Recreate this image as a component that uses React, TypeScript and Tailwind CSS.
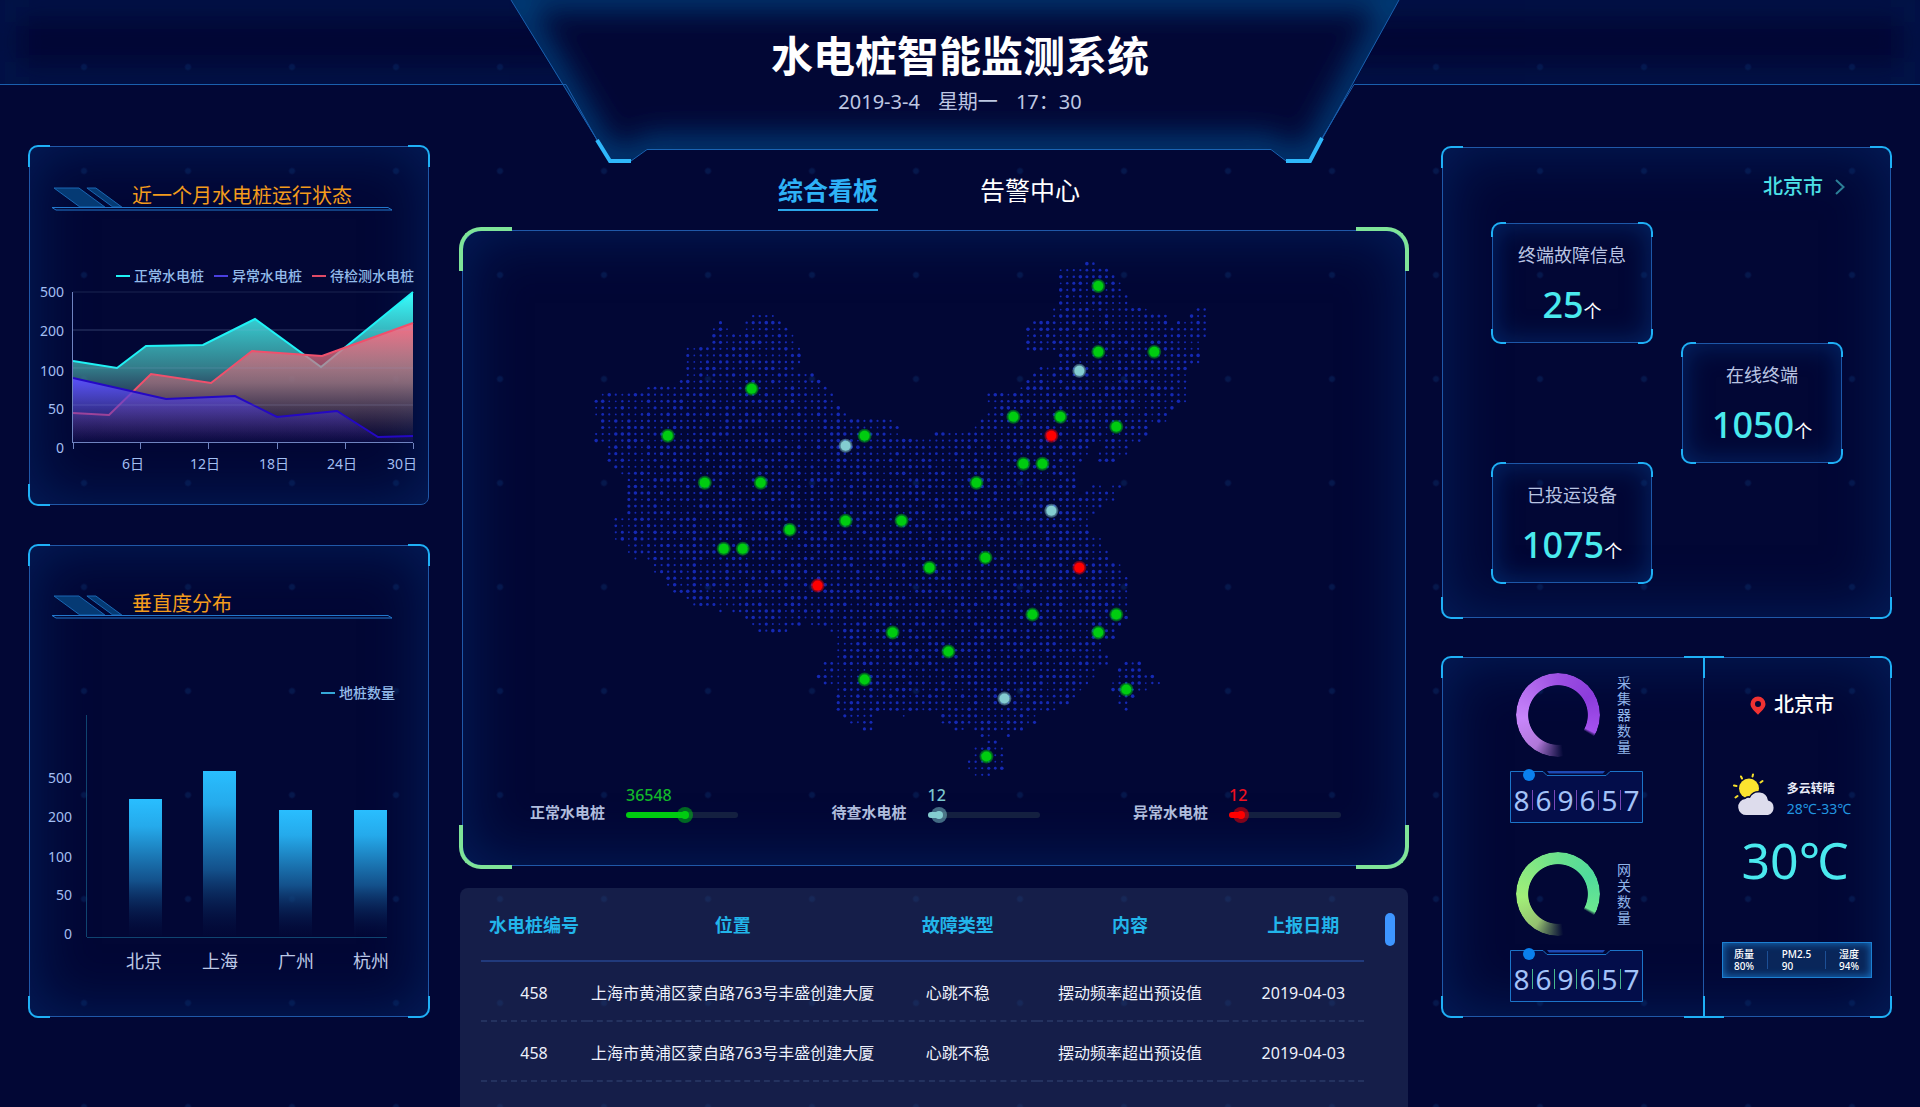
import React from "react";

type Span = [number, number];

/* ------------------------------------------------------------------ */
/* Framing                                                             */
/* ------------------------------------------------------------------ */

const CORNER = {
  tl: "-top-0.5 -left-0.5 border-t-2 border-l-2 rounded-tl-[10px]",
  tr: "-top-0.5 -right-0.5 border-t-2 border-r-2 rounded-tr-[10px]",
  bl: "-bottom-0.5 -left-0.5 border-b-2 border-l-2 rounded-bl-[10px]",
  br: "-bottom-0.5 -right-0.5 border-b-2 border-r-2 rounded-br-[10px]",
};

type CornerKey = keyof typeof CORNER;

function Corners({ which = ["tl", "tr", "bl", "br"], size }: { which?: CornerKey[]; size: string }) {
  return (
    <>
      {which.map((k) => (
        <span key={k} aria-hidden="true" className={`pointer-events-none absolute border-[#1fb0f6] ${size} ${CORNER[k]}`} />
      ))}
    </>
  );
}

function Panel({
  children,
  className = "",
  corners,
}: {
  children: React.ReactNode;
  className?: string;
  corners?: CornerKey[];
}) {
  return (
    <section
      className={`relative rounded-lg border border-[#2058a8] shadow-[inset_0_0_60px_rgba(4,48,120,0.58)] ${className}`}
    >
      <Corners which={corners} size="size-[22px]" />
      {children}
    </section>
  );
}

function PanelTitle({ children }: { children: React.ReactNode }) {
  return (
    <div className="relative mr-[35px] ml-[22px] h-[30px]">
      <svg className="absolute inset-x-0 bottom-0 h-6 w-full" viewBox="0 0 342 24" preserveAspectRatio="none" fill="none" aria-hidden="true">
        <path d="M2 1h25l26 19H28z" fill="#053a74" stroke="#1a67b4" />
        <path d="M35 1h9l26 19H61z" fill="#053a74" stroke="#1a67b4" />
        <path d="M0 20.500h337l4 2.500H4z" stroke="#2277cc" />
      </svg>
      <h2 className="relative ml-20 text-xl leading-[30px] text-[#f39c1c]">{children}</h2>
    </div>
  );
}

/* ------------------------------------------------------------------ */
/* Header                                                              */
/* ------------------------------------------------------------------ */

function Header() {
  return (
    <header className="relative h-[146px] shrink-0 text-center">
      <svg className="absolute inset-x-0 top-0 h-[166px] w-full" viewBox="0 0 1920 166" preserveAspectRatio="none" fill="none" aria-hidden="true">
        <defs>
          <filter id="soft" x="-20%" y="-60%" width="140%" height="220%">
            <feGaussianBlur stdDeviation="15" />
          </filter>
          <clipPath id="hub">
            <path d="M511 0 562 84 610 161H631L647 149H1271L1286 161H1310L1353 84 1399 0Z" />
          </clipPath>
          <clipPath id="barL">
            <path d="M0 0H511L562 84H0Z" />
          </clipPath>
          <clipPath id="barR">
            <path d="M1399 0H1920V84H1353Z" />
          </clipPath>
        </defs>
        <g clipPath="url(#barL)">
          <path d="M0 0H600V84H0Z" stroke="#04205f" strokeWidth="24" filter="url(#soft)" opacity="0.6" />
        </g>
        <g clipPath="url(#barR)">
          <path d="M1320 0H1920V84H1320Z" stroke="#04205f" strokeWidth="24" filter="url(#soft)" opacity="0.6" />
        </g>
        <path d="M511 0 562 84 610 161H631L647 149H1271L1286 161H1310L1353 84 1399 0Z" fill="#020735" />
        <g clipPath="url(#hub)">
          <path d="M505 -6 604 163H634L650 150H1268L1284 163H1314L1405 -6Z" stroke="#04437f" strokeWidth="26" filter="url(#soft)" />
        </g>
        <path d="M0 84.500H566L597 140M511 0 610 161" stroke="#1a5fae" />
        <path d="M1920 84.500H1354L1322 138M1399 0 1310 161" stroke="#1a5fae" />
        <path d="M631 161 647 149.500H1271L1286 161" stroke="#1a64b4" />
        <path d="M597 140 610 161H631" stroke="#2fb8fb" strokeWidth="4" />
        <path d="M1322 138 1310 161H1286" stroke="#2fb8fb" strokeWidth="4" />
      </svg>
      <div className="relative pt-8">
        <h1 className="text-[42px] leading-[48px] font-bold text-white">水电桩智能监测系统</h1>
        <p className="mt-2 flex justify-center gap-[18px] text-xl leading-7 text-[#bfc7e2]">
          <span>2019-3-4</span>
          <span>星期一</span>
          <span>17：30</span>
        </p>
      </div>
    </header>
  );
}

/* ------------------------------------------------------------------ */
/* Left column                                                         */
/* ------------------------------------------------------------------ */

function LegendItem({ color, label }: { color: string; label: string }) {
  return (
    <li className="flex items-center gap-1">
      <span className={`h-0.5 w-3.5 ${color}`} />
      {label}
    </li>
  );
}

const NORMAL: Span[] = [[44, 93], [88, 100], [117, 78], [174, 77], [226, 51], [292, 99], [384, 24]];
const PENDING: Span[] = [[44, 145], [80, 147], [122, 106], [182, 115], [223, 83], [293, 88], [384, 55]];
const FAULTY: Span[] = [[44, 110], [137, 131], [206, 128], [248, 149], [308, 143], [349, 169], [384, 168]];

const toLine = (pts: Span[]) => pts.map((p) => p.join(",")).join(" ");
const toArea = (pts: Span[]) => `${toLine(pts)} 384,175 44,175`;

function StatusChart() {
  const yTicks: [string, number][] = [["500", 23], ["200", 62], ["100", 102], ["50", 140], ["0", 179]];
  const xTicks: [string, number][] = [["6日", 104], ["12日", 176], ["18日", 245], ["24日", 313], ["30日", 373]];
  return (
    <svg className="-mt-3 w-full" viewBox="1 4 398 204" fill="none" role="img" aria-label="近一个月水电桩运行状态">
      <defs>
        <linearGradient id="gNormal" gradientUnits="userSpaceOnUse" x1="0" y1="24" x2="0" y2="175">
          <stop offset="0" stopColor="#38ffff" />
          <stop offset="0.5" stopColor="#3f9ba0" stopOpacity="0.8" />
          <stop offset="1" stopColor="#5a3450" stopOpacity="0" />
        </linearGradient>
        <linearGradient id="gPending" gradientUnits="userSpaceOnUse" x1="0" y1="55" x2="0" y2="175">
          <stop offset="0" stopColor="#ff6880" stopOpacity="0.95" />
          <stop offset="0.5" stopColor="#c0707c" stopOpacity="0.6" />
          <stop offset="1" stopColor="#50303c" stopOpacity="0" />
        </linearGradient>
        <linearGradient id="gFaulty" gradientUnits="userSpaceOnUse" x1="0" y1="110" x2="0" y2="175">
          <stop offset="0" stopColor="#5a50fa" />
          <stop offset="1" stopColor="#3a20a0" stopOpacity="0.1" />
        </linearGradient>
      </defs>
      <path d="M44 24H384M44 62H384M44 100H384M44 137H384" stroke="#1b2450" />
      <polygon points={toArea(NORMAL)} fill="url(#gNormal)" />
      <polyline points={toLine(NORMAL)} stroke="#1ff2f5" strokeWidth="2" />
      <polygon points={toArea(PENDING)} fill="url(#gPending)" />
      <polyline points={toLine(PENDING)} stroke="#f0506c" strokeWidth="2" />
      <polygon points={toArea(FAULTY)} fill="url(#gFaulty)" />
      <polyline points={toLine(FAULTY)} stroke="#2408c4" strokeWidth="2" />
      <path d="M44 62H384M44 100H384M44 137H384" stroke="#8ea0d8" strokeOpacity="0.18" />
      <path d="M43.500 24V175M44 174.500H384M44.500 175V181M111.500 175V181M179.500 175V181M248.500 175V181M316.500 175V181M384.500 175V181" stroke="#6f83c0" />
      <g fill="#a3bff2" fontSize="14" dominantBaseline="central">
        {yTicks.map(([t, y]) => (
          <text key={t} x="35" y={y} textAnchor="end">{t}</text>
        ))}
        {xTicks.map(([t, x]) => (
          <text key={t} x={x} y="195" textAnchor="middle">{t}</text>
        ))}
      </g>
    </svg>
  );
}

function BarChart() {
  const yTicks: [string, number][] = [["500", 68], ["200", 107], ["100", 147], ["50", 185], ["0", 224]];
  const bars: [string, number, number, number][] = [
    ["北京", 100, 90, 115],
    ["上海", 174, 62, 191],
    ["广州", 250, 101, 267],
    ["杭州", 325, 101, 342],
  ];
  return (
    <svg className="w-full" viewBox="1 0 398 270" fill="none" role="img" aria-label="垂直度分布">
      <defs>
        <linearGradient id="gBar" x1="0" y1="0" x2="0" y2="1">
          <stop offset="0" stopColor="#29beff" />
          <stop offset="0.2" stopColor="#25aaeb" />
          <stop offset="0.6" stopColor="#14548f" stopOpacity="0.95" />
          <stop offset="1" stopColor="#041040" stopOpacity="0.1" />
        </linearGradient>
      </defs>
      <path d="M57.500 6V228M58 228.500H358" stroke="#0f4470" />
      {bars.map(([name, x, y, cx]) => (
        <g key={name}>
          <rect x={x} y={y} width="33" height={227 - y} fill="url(#gBar)" />
          <text x={cx} y="252" fontSize="18" fill="#bcc8e6" textAnchor="middle" dominantBaseline="central">{name}</text>
        </g>
      ))}
      <g fill="#a3bff2" fontSize="14" textAnchor="end" dominantBaseline="central">
        {yTicks.map(([t, y]) => (
          <text key={t} x="43" y={y}>{t}</text>
        ))}
      </g>
    </svg>
  );
}

/* ------------------------------------------------------------------ */
/* Map                                                                 */
/* ------------------------------------------------------------------ */

/* Runs of lattice columns per row, north to south. */
const MAP_ROWS: Span[][] = [
  [[75, 76]],
  [[71, 78]],
  [[71, 79]],
  [[71, 80]],
  [[71, 80]],
  [[71, 81]],
  [[71, 81]],
  [[70, 84], [92, 93]],
  [[24, 27], [70, 87], [91, 93]],
  [[19, 19], [23, 28], [67, 87], [89, 93]],
  [[18, 20], [23, 29], [66, 93]],
  [[18, 30], [66, 93]],
  [[18, 30], [66, 92]],
  [[14, 31], [66, 92]],
  [[14, 31], [71, 92]],
  [[14, 31], [71, 92]],
  [[14, 30], [68, 90]],
  [[14, 33], [67, 90]],
  [[13, 34], [66, 90]],
  [[8, 35], [65, 90]],
  [[1, 36], [60, 90]],
  [[0, 36], [60, 90]],
  [[0, 37], [61, 88]],
  [[0, 38], [60, 87]],
  [[1, 45], [59, 87]],
  [[1, 46], [58, 84]],
  [[0, 46], [52, 84]],
  [[0, 83]],
  [[2, 75], [78, 81]],
  [[2, 75], [77, 81]],
  [[2, 74], [77, 79]],
  [[3, 73]],
  [[4, 73]],
  [[5, 73]],
  [[5, 73], [76, 77], [79, 80]],
  [[5, 73], [75, 79]],
  [[5, 79]],
  [[5, 77]],
  [[5, 76]],
  [[3, 75]],
  [[3, 75]],
  [[3, 75]],
  [[3, 77]],
  [[5, 77]],
  [[5, 78]],
  [[6, 6], [8, 78]],
  [[9, 80]],
  [[9, 80]],
  [[11, 81]],
  [[11, 81]],
  [[12, 81]],
  [[14, 81]],
  [[15, 81]],
  [[19, 19], [21, 81]],
  [[23, 81]],
  [[24, 31], [33, 80]],
  [[25, 29], [36, 79]],
  [[37, 79]],
  [[37, 77]],
  [[37, 77]],
  [[37, 78]],
  [[35, 78], [81, 83]],
  [[35, 76], [80, 83]],
  [[34, 76], [80, 85]],
  [[35, 75], [79, 86]],
  [[37, 74], [79, 84]],
  [[37, 73], [80, 82]],
  [[37, 72], [80, 81]],
  [[37, 70], [81, 81]],
  [[38, 42], [47, 47], [53, 67]],
  [[39, 42], [53, 67]],
  [[41, 42], [55, 56], [58, 65]],
  [[59, 60], [63, 63]],
  [[60, 61]],
  [[58, 62]],
  [[58, 62]],
  [[57, 62]],
  [[57, 62]],
  [[58, 60]],
];

const RADII = [1, 1.5, 1.1, 1.8, 1.3, 0.9, 1.6, 1.2, 1.8, 1.1, 1.4];

const MARKERS: Record<string, Span[]> = {
  "#00cc10": [
    [751, 389], [667, 436], [864, 436], [704, 483], [760, 483], [845, 521], [901, 521], [789, 530], [723, 549],
    [742, 549], [929, 568], [1098, 286], [1098, 352], [1154, 352], [1013, 417], [1060, 417], [1116, 427],
    [1023, 464], [1042, 464], [976, 483], [985, 558], [1032, 615], [1116, 615], [892, 633], [948, 652],
    [864, 680], [1098, 633], [1126, 690], [986, 757],
  ],
  "#84cdd0": [[845, 446], [1079, 371], [1051, 511], [1004, 699]],
  "#ff0000": [[817, 586], [1051, 436], [1079, 568]],
};

function ChinaMap() {
  const dots: React.ReactNode[] = [];
  MAP_ROWS.forEach((runs, r) => {
    runs.forEach(([a, b]) => {
      for (let c = a; c <= b; c++) {
        const k = (c * 7 + r * 5 + ((c * r) % 13) * 3 + (c % 3) * r) % RADII.length;
        dots.push(<circle key={`${r}-${c}`} cx={595.3 + c * 6.55} cy={263.7 + r * 6.56} r={RADII[k]} />);
      }
    });
  });
  return (
    <svg className="w-full" viewBox="462 231 943 550" role="img" aria-label="全国水电桩分布">
      <g fill="#1529b4">{dots}</g>
      {Object.entries(MARKERS).map(([color, pts]) =>
        pts.map(([x, y]) => (
          <g key={`${x}-${y}`} fill={color}>
            <circle cx={x} cy={y} r="7" opacity="0.4" />
            <circle cx={x} cy={y} r="6" opacity="0.3" />
            <circle cx={x} cy={y} r="5" />
          </g>
        )),
      )}
    </svg>
  );
}

const GAUGES = [
  {
    id: "g-normal",
    label: "正常水电桩",
    value: "36548",
    pct: 53,
    text: "text-[#12b82a]",
    track: "bg-[linear-gradient(90deg,#00cc10_53%,#142040_53%)]",
    thumb: "[&::-webkit-slider-thumb]:bg-[#00cc10] [&::-webkit-slider-thumb]:shadow-[0_0_0_4px_rgba(0,204,16,0.5)]",
  },
  {
    id: "g-pending",
    label: "待查水电桩",
    value: "12",
    pct: 7,
    text: "text-[#7cc6ce]",
    track: "bg-[linear-gradient(90deg,#84cdd0_10%,#142040_10%)]",
    thumb: "[&::-webkit-slider-thumb]:bg-[#84cdd0] [&::-webkit-slider-thumb]:shadow-[0_0_0_4px_rgba(132,205,208,0.5)]",
  },
  {
    id: "g-faulty",
    label: "异常水电桩",
    value: "12",
    pct: 8,
    text: "text-[#f01020]",
    track: "bg-[linear-gradient(90deg,#ff0000_10%,#142040_10%)]",
    thumb: "[&::-webkit-slider-thumb]:bg-[#ff0000] [&::-webkit-slider-thumb]:shadow-[0_0_0_4px_rgba(255,0,0,0.5)]",
  },
];

const GREEN_CORNERS = [
  "-top-1 -left-1 border-t-4 border-l-4 rounded-tl-[22px]",
  "-top-1 -right-1 border-t-4 border-r-4 rounded-tr-[22px]",
  "-bottom-1 -left-1 border-b-4 border-l-4 rounded-bl-[22px]",
  "-bottom-1 -right-1 border-b-4 border-r-4 rounded-br-[22px]",
];

function MapPanel() {
  return (
    <section className="relative mx-0.5 rounded-[20px] border border-[#2058a8] pb-[41px] shadow-[inset_0_0_60px_rgba(4,48,120,0.58)]">
      {GREEN_CORNERS.map((c) => (
        <span key={c} aria-hidden="true" className={`pointer-events-none absolute h-11 w-[53px] border-[#7fe498] ${c}`} />
      ))}
      <ChinaMap />
      <div className="mt-1.5 flex justify-between pr-[64px] pl-[67px]">
        {GAUGES.map((g) => (
          <div key={g.id} className="flex items-end gap-[21px]">
            <label htmlFor={g.id} className="text-[15px] leading-6 font-semibold text-[#b0bddd]">
              {g.label}
            </label>
            <div className="flex w-28 flex-col pb-1.5">
              <output htmlFor={g.id} className={`text-base leading-[18px] font-medium ${g.text}`}>
                {g.value}
              </output>
              <input
                id={g.id}
                type="range"
                defaultValue={g.pct}
                className={`mt-2 h-1.5 w-full appearance-none rounded-full [&::-webkit-slider-thumb]:size-2 [&::-webkit-slider-thumb]:appearance-none [&::-webkit-slider-thumb]:rounded-full ${g.track} ${g.thumb}`}
              />
            </div>
          </div>
        ))}
      </div>
    </section>
  );
}

function FaultTable() {
  const rows = [1, 2];
  return (
    <section className="mt-[22px] flex flex-1 rounded-t-lg bg-[#151e49] bg-[radial-gradient(circle,#172858_2px,transparent_4px)] bg-[length:104px_104px] bg-[position:-12px_-41px] pt-[7px] pr-[13px] pl-[21px]">
      <table className="h-fit flex-1 table-fixed border-collapse text-center">
        <colgroup>
          <col className="w-[12%]" />
          <col className="w-[33%]" />
          <col className="w-[18%]" />
          <col className="w-[21%]" />
          <col className="w-[16%]" />
        </colgroup>
        <thead>
          <tr className="h-[66px] border-b-2 border-[#213a7c] text-lg leading-6 text-[#22b5ea]">
            <th scope="col" className="pb-1.5 font-semibold">水电桩编号</th>
            <th scope="col" className="pb-1.5 font-semibold">位置</th>
            <th scope="col" className="pb-1.5 font-semibold">故障类型</th>
            <th scope="col" className="pb-1.5 font-semibold">内容</th>
            <th scope="col" className="pb-1.5 pl-5 font-semibold">上报日期</th>
          </tr>
        </thead>
        <tbody>
          {rows.map((r) => (
            <tr key={r} className="h-[60px] border-b-2 border-dashed border-[#24325f] text-base leading-6 text-[#eef1fb]">
              <td className="pt-1">458</td>
              <td className="pt-1 whitespace-nowrap">上海市黄浦区蒙自路763号丰盛创建大厦</td>
              <td className="pt-1">心跳不稳</td>
              <td className="pt-1">摆动频率超出预设值</td>
              <td className="pt-1 pl-5">2019-04-03</td>
            </tr>
          ))}
        </tbody>
      </table>
      <span aria-hidden="true" className="mt-[18px] ml-[21px] h-[33px] w-2.5 rounded-full bg-[#3d95ff]" />
    </section>
  );
}

/* ------------------------------------------------------------------ */
/* Right column                                                        */
/* ------------------------------------------------------------------ */

function StatCard({ label, value, className }: { label: string; value: string; className: string }) {
  return (
    <article
      className={`relative h-[120px] w-[160px] rounded-lg border border-[#1d57a8] pt-[17px] text-center shadow-[inset_0_0_28px_rgba(4,52,125,0.7)] ${className}`}
    >
      <Corners size="size-[15px]" />
      <h3 className="text-lg leading-7 text-[#b9c4e2]">{label}</h3>
      <p className="mt-3 text-4xl leading-[48px] font-medium text-[#4aeaee]">
        {value}
        <span className="text-lg font-normal text-white">个</span>
      </p>
    </article>
  );
}

function Counter({ separator }: { separator: string }) {
  return (
    <div className="relative h-[52px] w-[133px]">
      <svg className="absolute -top-1 left-0 h-14 w-full" viewBox="0 -4 133 56" fill="none" aria-hidden="true">
        <path d="M0.500 0.500H33L37 4.500H96L100 0.500H132.500V51.500H0.500Z" fill="#030d4a" stroke="#1c74c8" />
        <path d="M37 0H95L93 2.500H39Z" fill="#1d48b4" />
        <circle cx="19" cy="4" r="6" fill="#0a80ee" />
      </svg>
      <div className="relative flex h-full items-center justify-center pt-1.5">
        {["8", "6", "9", "6", "5", "7"].map((d, i) => (
          <React.Fragment key={i}>
            {i > 0 && <span aria-hidden="true" className={`h-5 w-px ${separator}`} />}
            <span className="w-[21px] text-center text-[28px] leading-8 text-[#a3c2f8]">{d}</span>
          </React.Fragment>
        ))}
      </div>
    </div>
  );
}

function Device({ label, ring, separator, className }: { label: string; ring: string; separator: string; className: string }) {
  return (
    <div className={`ml-[67px] ${className}`}>
      <div className="ml-[6px] flex items-center">
        <span
          aria-hidden="true"
          className={`size-[84px] rounded-full [mask:radial-gradient(closest-side,transparent_70%,black_72%)] ${ring}`}
        />
        <span className="ml-[16px] w-4 text-center text-sm leading-4 break-all text-[#90b4ea]">{label}</span>
      </div>
      <div className="mt-3.5">
        <Counter separator={separator} />
      </div>
    </div>
  );
}

function WeatherIcon() {
  return (
    <svg className="size-[43px]" viewBox="0 0 43 43" aria-hidden="true">
      <g stroke="#f5e02c" strokeWidth="2" strokeLinecap="round">
        <path d="M2.500 24.500 4.500 23M1 12.500 3.500 13M8 3.500 9 5.500M20 1.500 19.500 3.500M29.500 8 27.500 9.500" />
      </g>
      <circle cx="16" cy="15.500" r="10" fill="#fbe32f" />
      <g fill="#dddcec" stroke="#020735" strokeWidth="3" paintOrder="stroke">
        <path d="M14 42a8 8 0 0 1-1.500-16 4 4 0 0 1 4.500-1 9.500 9.500 0 0 1 18 2.500A7.500 7.500 0 0 1 35 42Z" />
      </g>
    </svg>
  );
}

function Weather() {
  const facts: [string, string][] = [["质量", "80%"], ["PM2.5", "90"], ["湿度", "94%"]];
  return (
    <div className="relative flex flex-1 flex-col items-center border-l border-[#2058a8]">
      <span aria-hidden="true" className="absolute -top-0.5 -left-5 h-0.5 w-10 bg-[#1fb0f6]" />
      <span aria-hidden="true" className="absolute top-0 -left-px h-5 w-0.5 bg-[#1fb0f6]" />
      <span aria-hidden="true" className="absolute -bottom-0.5 -left-5 h-0.5 w-10 bg-[#1fb0f6]" />
      <span aria-hidden="true" className="absolute bottom-0 -left-px h-5 w-0.5 bg-[#1fb0f6]" />

      <h2 className="mt-8 flex items-center gap-2 pr-2.5 text-xl leading-[30px] font-medium text-white">
        <svg className="h-[19px] w-4" viewBox="0 0 16 19" fill="#f03232" fillRule="evenodd" aria-hidden="true">
          <path d="M8 0.500A7.500 7.500 0 0 0 .5 8c0 4 4.500 7.500 7.500 10.800C11 15.500 15.500 12 15.500 8A7.500 7.500 0 0 0 8 .5Zm0 4.500a3 3 0 1 1 0 6 3 3 0 0 1 0-6Z" />
        </svg>
        北京市
      </h2>

      <div className="mt-[50px] flex items-center gap-[11px] pr-2.5">
        <WeatherIcon />
        <div className="pt-2">
          <p className="text-xs leading-[22px] font-bold text-[#e9ecf8]">多云转晴</p>
          <p className="text-sm leading-[18px] text-[#2196e0]">28℃-33℃</p>
        </div>
      </div>
      <p className="mt-3 pr-1 text-[50px] leading-[60px] text-[#4ae9ee]">30℃</p>

      <dl className="mt-[52px] flex h-9 w-[150px] items-center justify-between border border-[#1c80d2] bg-[#09265a] pr-3 pl-[11px] text-[10px] leading-[12px] font-medium text-white shadow-[inset_0_0_8px_#1878cc]">
        {facts.map(([k, v], i) => (
          <React.Fragment key={k}>
            {i > 0 && <div aria-hidden="true" className="h-[18px] w-px bg-[#1c4f96]" />}
            <div>
              <dt>{k}</dt>
              <dd>{v}</dd>
            </div>
          </React.Fragment>
        ))}
      </dl>
    </div>
  );
}

/* ------------------------------------------------------------------ */

export default function App() {
  return (
    <div className="flex min-h-screen flex-col bg-[#020735] bg-[radial-gradient(circle,#06184c_2px,transparent_4px)] bg-[length:104px_104px] bg-[position:32px_15px] font-['Noto_Sans','Noto_Sans_CJK_SC',sans-serif]">
      <Header />
      <main className="flex flex-1 pr-[29px] pl-[29px]">
        <div className="flex flex-[400_1_0px] flex-col">
          <Panel className="pt-[34px] pb-[28px]" corners={["tl", "tr", "bl"]}>
            <PanelTitle>近一个月水电桩运行状态</PanelTitle>
            <ul className="mt-[57px] flex justify-end gap-2.5 pr-3.5 text-sm leading-4 font-medium text-[#93bbea]">
              <LegendItem color="bg-[#1ff2f5]" label="正常水电桩" />
              <LegendItem color="bg-[#4a3fe0]" label="异常水电桩" />
              <LegendItem color="bg-[#e04a66]" label="待检测水电桩" />
            </ul>
            <StatusChart />
          </Panel>
          <Panel className="mt-10 pt-[43px] pb-[37px]">
            <PanelTitle>垂直度分布</PanelTitle>
            <ul className="mt-[66px] flex justify-end pr-[33px] text-sm leading-4 font-medium text-[#93bbea]">
              <LegendItem color="bg-[#35a8d8]" label="地桩数量" />
            </ul>
            <div className="mt-2">
              <BarChart />
            </div>
          </Panel>
        </div>

        <div className="mr-[34px] ml-[31px] flex flex-[948_1_0px] flex-col">
          <nav className="flex h-[84px] items-start justify-center gap-[102px] pt-7 pr-2.5">
            <button type="button" className="border-b-2 border-[#2ba6ea] pb-[3px] text-[25px] leading-8 font-semibold text-[#2eb2f7]">
              综合看板
            </button>
            <button type="button" className="border-b-2 border-transparent pb-[3px] text-[25px] leading-8 text-white">
              告警中心
            </button>
          </nav>
          <MapPanel />
          <FaultTable />
        </div>

        <div className="flex flex-[449_1_0px] flex-col pt-px">
          <Panel className="flex flex-col pt-6 pb-[34px]">
            <button type="button" className="mr-[45px] flex items-center gap-3 self-end text-xl leading-[30px] font-medium text-[#4ce0e6]">
              北京市
              <svg className="h-4 w-2.5" viewBox="0 0 10 16" fill="none" stroke="#2c8098" strokeWidth="2" aria-hidden="true">
                <path d="M1 1l7.500 7L1 15" />
              </svg>
            </button>
            <div className="mt-[21px] flex flex-col pr-12 pl-[49px]">
              <StatCard className="self-start" label="终端故障信息" value="25" />
              <StatCard className="self-end" label="在线终端" value="1050" />
              <StatCard className="self-start" label="已投运设备" value="1075" />
            </div>
          </Panel>

          <Panel className="mt-[39px] flex h-[360px]">
            <div className="w-[260px] pt-[15px]">
              <Device
                className=""
                label="采集器数量"
                separator="bg-[#7a48b8]"
                ring="bg-[conic-gradient(#9d50e2_0deg,#8c3cdc_60deg,#a552ee_116deg,transparent_121deg,transparent_172deg,#b077d8_215deg,#c886fb_265deg,#9d50e2_360deg)]"
              />
              <Device
                className="mt-[29px]"
                label="网关数量"
                separator="bg-[#46b88e]"
                ring="bg-[conic-gradient(#6ae08c_0deg,#50da9c_60deg,#6ce890_116deg,transparent_121deg,transparent_172deg,#94bf70_215deg,#a2f078_265deg,#6ae08c_360deg)]"
              />
            </div>
            <Weather />
          </Panel>
        </div>
      </main>
    </div>
  );
}
